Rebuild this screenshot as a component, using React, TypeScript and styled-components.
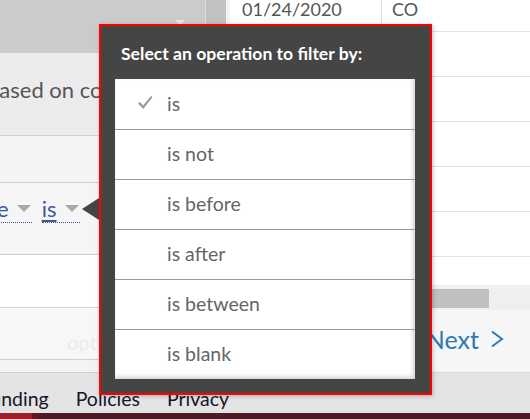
import styled, { createGlobalStyle } from 'styled-components';

const GlobalStyle = createGlobalStyle`
  html, body {
    margin: 0;
    padding: 0;
  }
  body {
    font-family: Lato, "Open Sans", sans-serif;
    background: #ffffff;
  }
`;

const Page = styled.div`
  position: relative;
  width: 530px;
  height: 419px;
  overflow: hidden;
  display: flex;
  flex-direction: column;
`;

const Workspace = styled.div`
  display: grid;
  grid-template-columns: 230px 1fr;
  height: 373px;
  overflow: hidden;
`;

/* left filter panel */

const LeftColumn = styled.div`
  display: flex;
  background: #f2f2f2;
  overflow: hidden;
`;

const LeftContent = styled.div`
  width: 205px;
  flex: none;
  display: flex;
  flex-direction: column;
  overflow: hidden;
  background: #f0f0f0;
`;

const ScrollStrip = styled.div`
  width: 20px;
  flex: none;
  border-left: 1px solid #d9d9d9;
  background: #c1c1c1;
`;

const PanelHeader = styled.div`
  height: 53px;
  flex: none;
  display: flex;
  justify-content: flex-end;
  padding: 20px 20px 0 0;
  box-sizing: border-box;
  background: #cbcbcb;
`;

const HeaderCaret = styled.span`
  width: 0;
  height: 0;
  border-left: 5px solid transparent;
  border-right: 5px solid transparent;
  border-top: 6px solid #e4e4e4;
`;

const Section = styled.div<{ $h: number; $bg: string; $line?: string }>`
  height: ${(p) => p.$h}px;
  flex: none;
  background: ${(p) => p.$bg};
  border-bottom: 1px solid ${(p) => p.$line || '#cfcfcf'};
  overflow: hidden;
  white-space: nowrap;
`;

const Intro = styled.p`
  margin: 24px 0 0 -13px;
  font-size: 22px;
  line-height: 26px;
  color: #555555;
`;

const FilterLine = styled.div`
  display: flex;
  gap: 10px;
  margin: 12px 0 0 -38px;
`;

const FilterLink = styled.a`
  display: inline-flex;
  align-items: center;
  gap: 8px;
  height: 27px;
  color: #3c5898;
  font-size: 22px;
  line-height: 26px;
  text-decoration: none;
  border-bottom: 1px dotted #3c5898;
`;

const LinkText = styled.span<{ $active?: boolean }>`
  ${(p) =>
    p.$active &&
    `
    text-decoration: underline;
    text-decoration-thickness: 2px;
    text-underline-offset: 3px;
  `}
`;

const Caret = styled.span`
  width: 0;
  height: 0;
  margin-right: 1px;
  border-left: 7px solid transparent;
  border-right: 7px solid transparent;
  border-top: 7px solid #a9a9a9;
`;

const Placeholder = styled.span`
  display: block;
  margin: 22px 0 0 67px;
  font-size: 20px;
  line-height: 24px;
  color: #ebebeb;
`;

/* right table */

const TableColumn = styled.div`
  display: flex;
  flex-direction: column;
  overflow: hidden;
`;

const TableScroll = styled.div`
  height: 285px;
  flex: none;
  overflow: hidden;
  background: #ffffff;
`;

const Table = styled.div`
  margin-top: -13px;
`;

const Row = styled.div`
  display: grid;
  grid-template-columns: 152px 1fr;
  height: 45px;
  box-sizing: border-box;
  border-bottom: 1px solid #e2e2e2;
`;

const Cell = styled.div<{ $first?: boolean }>`
  display: flex;
  align-items: center;
  padding-left: ${(p) => (p.$first ? 12 : 10)}px;
  border-right: ${(p) => (p.$first ? '1px solid #e2e2e2' : 'none')};
  font-size: 18px;
  color: #555555;
`;

const HScroll = styled.div`
  height: 25px;
  flex: none;
  padding-top: 4px;
  box-sizing: border-box;
  background: #efefef;
`;

const Thumb = styled.div`
  height: 19px;
  width: 249px;
  margin-left: 10px;
  background: #c0c0c0;
`;

const Pager = styled.div`
  flex: 1;
  display: flex;
  align-items: center;
  justify-content: flex-end;
  padding: 0 26px 4px 0;
  background: #f6f6f6;
  border-bottom: 1px solid #d6d6d6;
`;

const NextLink = styled.a`
  display: flex;
  align-items: center;
  gap: 11px;
  color: #2a7bb4;
  font-size: 25px;
  line-height: 30px;
  text-decoration: none;
`;

/* footer */

const Footer = styled.nav`
  height: 40px;
  flex: none;
  display: flex;
  gap: 27px;
  padding-top: 14px;
  box-sizing: border-box;
  background: #e4e4e4;
  white-space: nowrap;
`;

const FooterLink = styled.a<{ $first?: boolean }>`
  margin-left: ${(p) => (p.$first ? '-20px' : '0')};
  font-size: 19.5px;
  line-height: 24px;
  color: #15152a;
  text-decoration: none;
`;

const BottomBar = styled.div`
  height: 6px;
  flex: none;
  background: linear-gradient(
    to right,
    #a01e2c 0 32px,
    #6b1520 32px 38px,
    #4c1b26 38px
  );
`;

/* popover */

const Popover = styled.div`
  position: absolute;
  left: 99px;
  top: 24px;
  width: 333px;
  height: 371px;
  box-sizing: border-box;
  display: flex;
  flex-direction: column;
  border: 2px solid #ff0000;
  background: #454545;
  box-shadow: 1px 1px 4px rgba(0, 0, 0, 0.25);

  &::before {
    content: '';
    position: absolute;
    left: -19px;
    top: 172px;
    border-top: 11px solid transparent;
    border-bottom: 11px solid transparent;
    border-right: 17px solid #454545;
    filter: blur(0.6px);
  }
`;

const PopoverTitle = styled.h3`
  margin: 0;
  padding: 17px 0 0 20px;
  height: 53px;
  box-sizing: border-box;
  font-size: 17.6px;
  line-height: 22px;
  font-weight: 700;
  color: #ffffff;
`;

const OptionList = styled.ul`
  list-style: none;
  margin: 0 15px 0 14px;
  padding: 0;
  background: #ffffff;
  box-shadow: inset -2px -2px 4px rgba(0, 0, 0, 0.18);
`;

const Option = styled.li`
  position: relative;
  display: flex;
  align-items: center;
  height: 50px;
  box-sizing: border-box;
  padding: 0 0 2px 52px;
  font-size: 19.5px;
  color: #666666;
  & + & {
    border-top: 1px solid #9a9a9a;
  }
`;

const CheckMark = styled.svg`
  position: absolute;
  left: 22px;
  top: 16px;
`;

const operations = ['is', 'is not', 'is before', 'is after', 'is between', 'is blank'];

export default function App() {
  return (
    <Page>
      <GlobalStyle />
      <Workspace>
        <LeftColumn>
          <LeftContent>
            <PanelHeader>
              <HeaderCaret />
            </PanelHeader>
            <Section $h={82} $bg="#ececec">
              <Intro>based on conditions</Intro>
            </Section>
            <Section $h={46} $bg="#f4f4f4" $line="#cccccc" />
            <Section $h={71} $bg="#f5f5f5" $line="#cccccc">
              <FilterLine>
                <FilterLink href="#">
                  <LinkText>Date</LinkText>
                  <Caret />
                </FilterLink>
                <FilterLink href="#">
                  <LinkText $active>is</LinkText>
                  <Caret />
                </FilterLink>
              </FilterLine>
            </Section>
            <Section $h={52} $bg="#ffffff" $line="#d4d4d4" />
            <Section $h={51} $bg="#f7f7f7" $line="#d0d0d0">
              <Placeholder>options</Placeholder>
            </Section>
            <Section $h={12} $bg="#f3f3f3" $line="#d0d0d0" />
          </LeftContent>
          <ScrollStrip />
        </LeftColumn>

        <TableColumn>
          <TableScroll>
            <Table>
              <Row>
                <Cell $first>01/24/2020</Cell>
                <Cell>CO</Cell>
              </Row>
              {[0, 1, 2, 3, 4, 5].map((i) => (
                <Row key={i}>
                  <Cell $first />
                  <Cell />
                </Row>
              ))}
            </Table>
          </TableScroll>
          <HScroll>
            <Thumb />
          </HScroll>
          <Pager>
            <NextLink href="#">
              Next
              <svg width="14" height="18" viewBox="0 0 14 18">
                <path d="M2 1.5 L12 9 L2 16.5" fill="none" stroke="#2a7bb4" strokeWidth="2" />
              </svg>
            </NextLink>
          </Pager>
        </TableColumn>
      </Workspace>

      <Footer>
        <FooterLink href="#" $first>
          Funding
        </FooterLink>
        <FooterLink href="#">Policies</FooterLink>
        <FooterLink href="#">Privacy</FooterLink>
      </Footer>
      <BottomBar />

      <Popover role="dialog">
        <PopoverTitle>Select an operation to filter by:</PopoverTitle>
        <OptionList>
          {operations.map((op, i) => (
            <Option key={op}>
              {i === 0 && (
                <CheckMark width="16" height="15" viewBox="0 0 16 15">
                  <path
                    d="M1 8.5 L3 7 L6 10.5 L14 1 L15.5 2.2 L6.2 14 Z"
                    fill="#9a9a9a"
                  />
                </CheckMark>
              )}
              {op}
            </Option>
          ))}
        </OptionList>
      </Popover>
    </Page>
  );
}
